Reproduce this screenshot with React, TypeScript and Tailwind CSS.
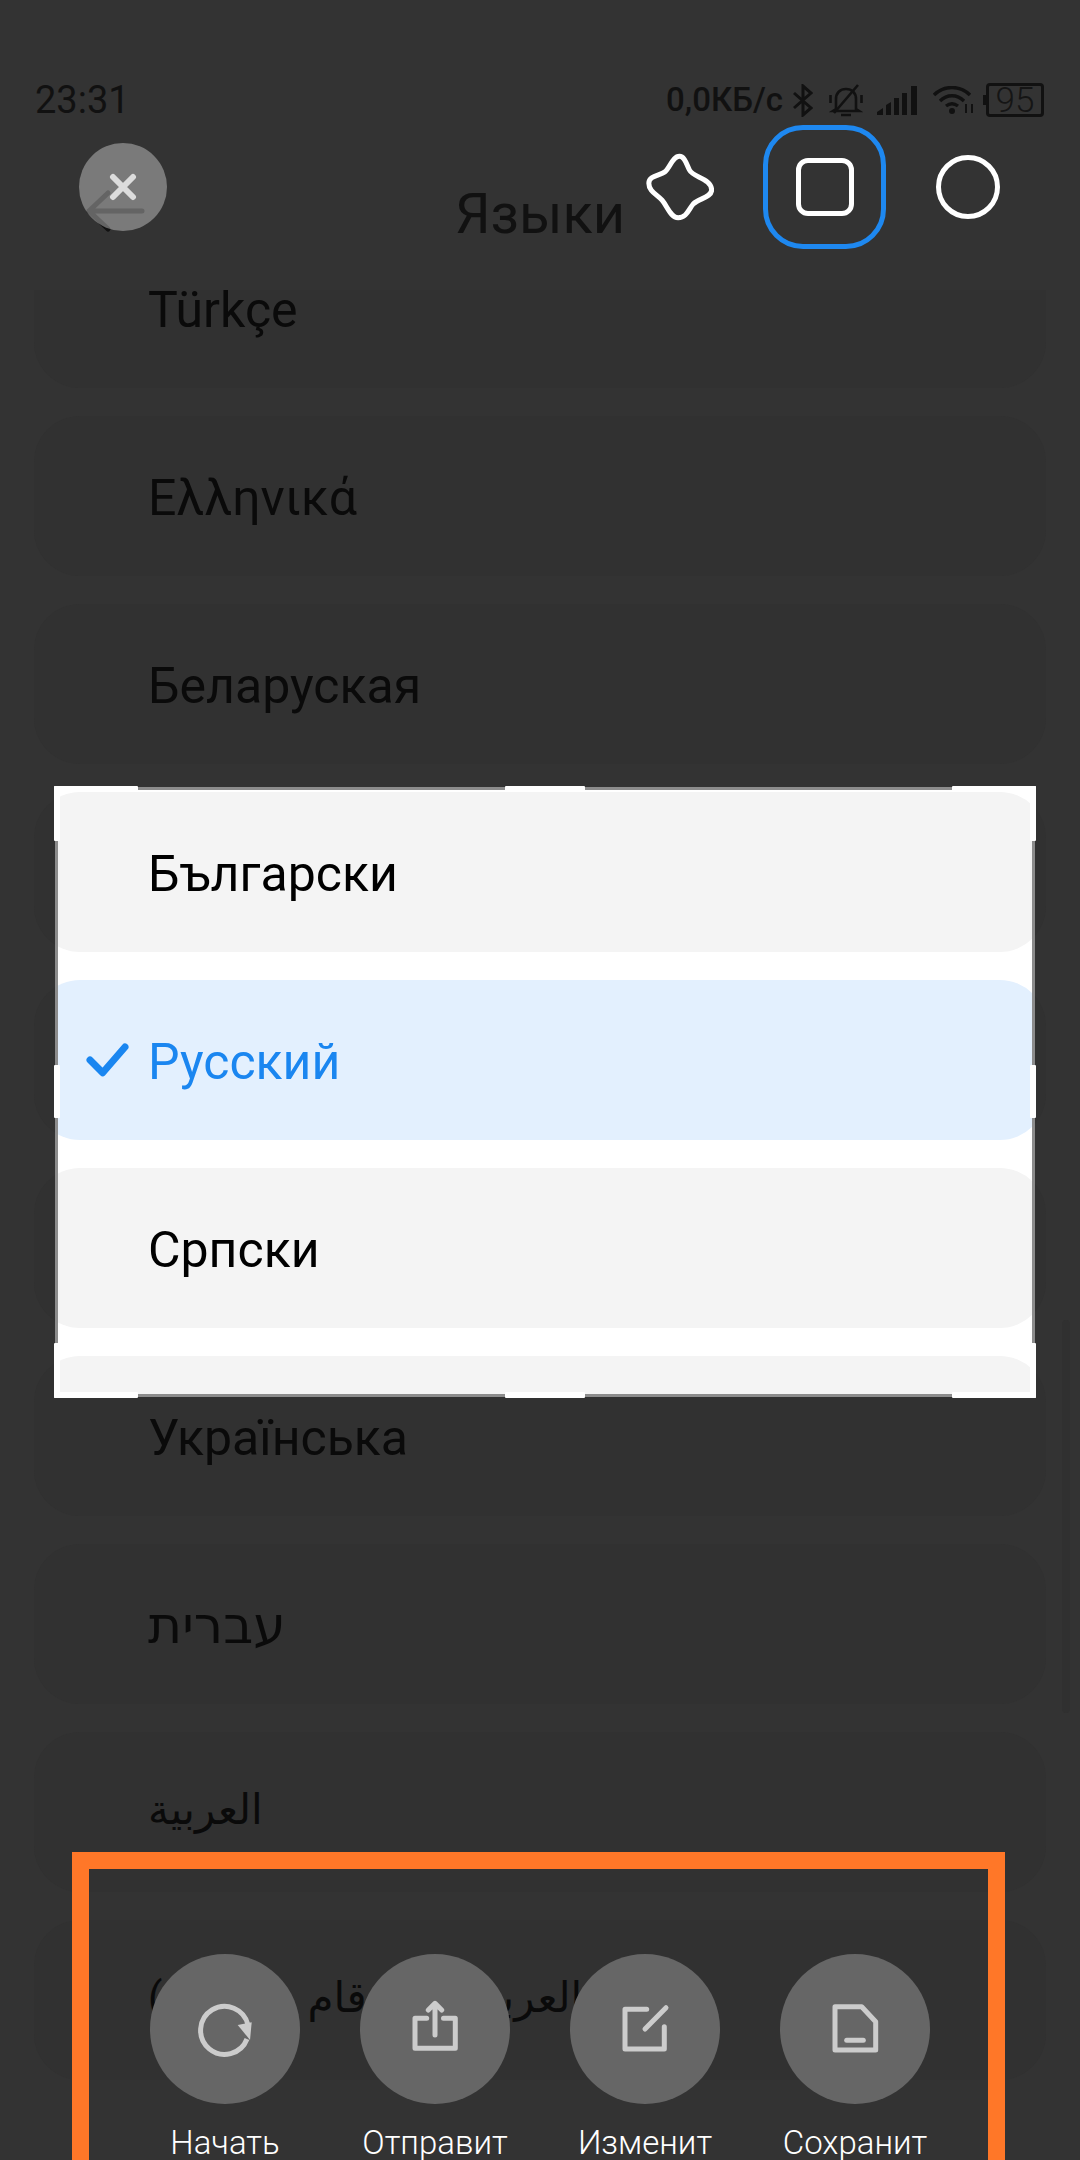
import React from 'react'

const languages = [
  { label: 'Türkçe' },
  { label: 'Ελληνικά' },
  { label: 'Беларуская' },
  { label: 'Български' },
  { label: 'Русский' },
  { label: 'Српски' },
  { label: 'Українська' },
  { label: 'עברית', rtl: true },
  { label: 'العربية', rtl: true, small: true },
  { label: 'العربية (الأرقام الغربية)', rtl: true, small: true },
]

const actions = [
  { label: 'Начать', icon: 'restart' },
  { label: 'Отправит', icon: 'share' },
  { label: 'Изменит', icon: 'edit' },
  { label: 'Сохранит', icon: 'save' },
]

const ActionIcon = ({ name }: { name: string }) => (
  <svg width="60" height="60" viewBox="0 0 60 60" fill="none" stroke="#cccccc" strokeWidth="5" strokeLinecap="round" strokeLinejoin="round">
    {name === 'restart' && (
      <>
        <path d="M52 40A24 24 0 1 1 53 26" strokeLinecap="butt" />
        <path d="M42.7 26L56.7 23.3L55 41Z" fill="#cccccc" stroke="none" />
      </>
    )}
    {name === 'share' && (
      <>
        <path d="M21.7 19.3H10V49.3H50.3V19.3H38.5" />
        <path d="M30 6V36M23.3 11L30 4.3L36.7 11" />
      </>
    )}
    {name === 'edit' && (
      <>
        <path d="M31.7 10.3H10V50H49.3V27.7" />
        <path d="M30 30L51 8.7" />
      </>
    )}
    {name === 'save' && (
      <>
        <path d="M10 7.7H36.7L50.7 22.7V51H10Z" />
        <path d="M21.7 41.3H38.3" />
      </>
    )}
  </svg>
)

const StatusIcons = () => (
  <div className="flex items-center">
    <svg width="20" height="33" viewBox="0 0 20 33" fill="none" stroke="#111111" strokeWidth="3" className="ml-[10px]">
      <path d="M1 9L18 24L10 31V2L18 9L1 24" />
    </svg>
    <svg width="34" height="33" viewBox="0 0 34 33" fill="none" stroke="#111111" strokeWidth="2.6" className="ml-[16px]">
      <path d="M7 25V15C7 9 11 5 17 5C23 5 27 9 27 15V25L30 27H4Z" />
      <path d="M29 1L5 29M12 31H22M1.5 11V19M32.5 11V19" />
    </svg>
    <svg width="40" height="29" viewBox="0 0 40 29" fill="#111111" className="ml-[14px]">
      <path d="M0 29V26L6 22V29ZM9 29V19L14 16V29ZM17 29V12H22V29ZM25 29V7H30V29ZM34 29V0H40V29Z" />
    </svg>
    <svg width="42" height="28" viewBox="0 0 42 28" fill="none" stroke="#111111" strokeWidth="3.4" className="ml-[16px]">
      <path d="M1 9C11 -1 27 -1 37 9M7 15C14 8 24 8 31 15M13 20C17 17 21 17 25 20" />
      <circle cx="19" cy="25" r="3" fill="#111111" stroke="none" />
      <path d="M33 18V27M39 18V27" strokeWidth="2" />
    </svg>
    <div className="relative ml-[11px] flex h-[34px] w-[58px] items-center justify-center rounded-[4px] border-[3px] border-[#111111] text-[35px] font-light leading-none text-[#151515]">
      <span className="absolute left-[-6px] top-[9px] h-[10px] w-[3px] bg-[#111111]" />
      95
    </div>
  </div>
)

const ListRow = ({ label, rtl, small, bright, selected }: { label: string; rtl?: boolean; small?: boolean; bright?: boolean; selected?: boolean }) => (
  <div
    className={`relative flex h-[160px] shrink-0 items-center rounded-[46px] pl-[114px] ${small ? 'pb-[4px]' : 'pt-[4px]'} ${
      bright ? (selected ? 'bg-[#e3f0fe]' : 'bg-[#f4f4f4]') : 'bg-[#313131]'
    }`}
  >
    {selected && (
      <svg width="44" height="34" viewBox="0 0 44 34" fill="none" stroke="#1a86f0" strokeWidth="7" strokeLinecap="round" strokeLinejoin="round" className="absolute left-[52px] top-[63px]">
        <path d="M4 17L16.7 29.7L39 4" />
      </svg>
    )}
    <span
      dir={rtl ? 'rtl' : undefined}
      className={`font-['Roboto','DejaVu_Sans',sans-serif] leading-none [word-spacing:20px] ${small ? 'text-[42px]' : rtl ? 'text-[52px]' : 'text-[50px]'} ${
        bright ? (selected ? 'text-[#1a86f0]' : 'text-black') : 'text-[#0a0a0a]'
      }`}
    >
      {label}
    </span>
  </div>
)

const Handle = ({ className }: { className: string }) => <div className={`absolute rounded-[1px] bg-white ${className}`} />

export default function App() {
  return (
    <div className="relative h-[2160px] w-[1080px] overflow-hidden bg-[#333333] font-['Roboto',sans-serif]">
      <div className="flex flex-col gap-[28px] px-[34px] pt-[228px]">
        {languages.map((r) => (
          <ListRow key={r.label} label={r.label} rtl={r.rtl} small={r.small} />
        ))}
      </div>

      <div className="absolute inset-x-0 top-0 h-[290px] bg-[#333333]">
        <div className="flex items-center justify-between pl-[35px] pr-[36px] pt-[78px] text-[#111111]">
          <span className="text-[38px] leading-[44px]">23:31</span>
          <div className="flex items-center">
            <span className="text-[33px] font-medium leading-[44px]">0,0КБ/с</span>
            <StatusIcons />
          </div>
        </div>
        <div className="pt-[59px] text-center text-[56px] leading-[66px] text-[#111111]">Языки</div>
      </div>

      <div className="absolute left-[1062px] top-[1320px] h-[393px] w-[8px] rounded-full bg-[#303030]" />

      {/* page's back arrow, the close button is see-through on top of it */}
      <svg width="70" height="50" viewBox="0 0 70 50" fill="none" stroke="#111111" strokeWidth="5" strokeLinecap="round" strokeLinejoin="round" className="absolute left-[82px] top-[186px]">
        <path d="M60 25H7M26 7L7 25L26 43" />
      </svg>
      <div className="absolute left-[79px] top-[143px] flex h-[88px] w-[88px] items-center justify-center rounded-full bg-white/35">
        <svg width="28" height="28" viewBox="0 0 28 28" stroke="#dcdcdc" strokeWidth="6" strokeLinecap="round">
          <path d="M4 4L24 24M24 4L4 24" />
        </svg>
      </div>

      {/* crop mode switcher */}
      <div className="absolute left-[646px] top-[125px] flex items-center">
        <svg width="68" height="68" viewBox="0 0 72 72" fill="none" stroke="white" strokeWidth="5.3">
          <path d="M35.5 3.5C41 3.5 43 12 46 18C50 26 69 27 69.5 39C69.5 47 56 48 50 54C45 60 43 68.5 34 68.5C26 68.5 23 57 17 50C12 44 3 41 3 32C3 24 14 24 20 20C26 15 28 3.5 35.5 3.5Z" />
        </svg>
        <div className="ml-[49px] flex h-[124px] w-[123px] items-center justify-center rounded-[40px] border-[5px] border-[#1e88f0]">
          <div className="h-[58px] w-[58px] rounded-[12px] border-[5px] border-white" />
        </div>
        <div className="ml-[50px] h-[64px] w-[64px] rounded-full border-[5px] border-white" />
      </div>

      {/* crop selection */}
      <div className="absolute left-[54px] top-[786px] h-[612px] w-[982px]">
        <div className="absolute inset-[1px] overflow-hidden border-[3px] border-[#8c8c8c] bg-white">
          <div className="-ml-[24px] mt-[2px] flex w-[1012px] flex-col gap-[28px]">
            {languages.slice(3, 7).map((r, i) => (
              <ListRow key={r.label} label={i === 3 ? '' : r.label} bright selected={i === 1} />
            ))}
          </div>
        </div>
        <Handle className="left-0 top-0 h-[6px] w-[84px]" />
        <Handle className="left-0 top-0 h-[55px] w-[6px]" />
        <Handle className="right-0 top-0 h-[6px] w-[84px]" />
        <Handle className="right-0 top-0 h-[55px] w-[6px]" />
        <Handle className="bottom-0 left-0 h-[6px] w-[84px]" />
        <Handle className="bottom-0 left-0 h-[55px] w-[6px]" />
        <Handle className="bottom-0 right-0 h-[6px] w-[84px]" />
        <Handle className="bottom-0 right-0 h-[55px] w-[6px]" />
        <Handle className="left-[451px] top-0 h-[6px] w-[80px]" />
        <Handle className="bottom-0 left-[451px] h-[6px] w-[80px]" />
        <Handle className="left-0 top-[279px] h-[53px] w-[6px]" />
        <Handle className="right-0 top-[279px] h-[53px] w-[6px]" />
      </div>

      {/* recording area + actions */}
      <div className="absolute left-[72px] top-[1852px] h-[340px] w-[933px] border-[17px] border-[#ff7728]">
        <div className="flex justify-between pl-[61px] pr-[58px] pt-[85px]">
          {actions.map((a) => (
            <div key={a.label} className="flex w-[150px] flex-col items-center">
              <div className="flex h-[150px] w-[150px] items-center justify-center rounded-full bg-[#666666]">
                <ActionIcon name={a.icon} />
              </div>
              <span className="mt-[24px] whitespace-nowrap text-[33px] font-light leading-[30px] text-white">{a.label}</span>
            </div>
          ))}
        </div>
      </div>
    </div>
  )
}
